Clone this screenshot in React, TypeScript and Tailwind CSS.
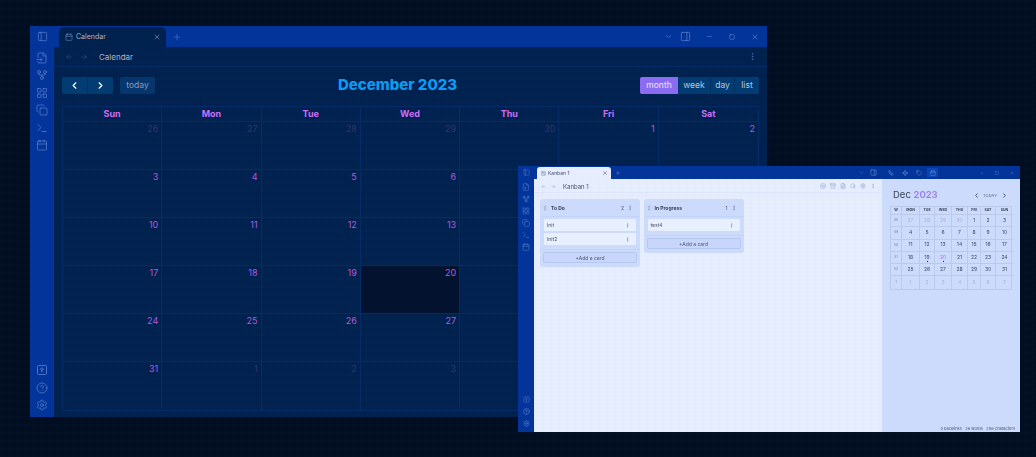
import { ArrowLeft, ArrowRight, Calendar, ChevronDown, ChevronLeft, ChevronRight, CircleHelp, Copy, EllipsisVertical, FileInput, GitFork, LayoutGrid, Minus, PanelLeft, PanelRight, Plus, Search, Settings, Square, SquareKanban, Terminal, X, FileText, Archive, CirclePlus, Tag, GripVertical, Workflow, Waypoints } from "lucide-react";

const gridBg = "bg-[linear-gradient(rgba(120,170,255,0.014)_1px,transparent_1px),linear-gradient(90deg,rgba(120,170,255,0.014)_1px,transparent_1px)] bg-[size:8px_8px]";
const lightGridBg = "bg-[linear-gradient(rgba(60,100,200,0.016)_1px,transparent_1px),linear-gradient(90deg,rgba(60,100,200,0.016)_1px,transparent_1px)] bg-[size:8px_8px]";

function VaultIcon({ size }: { size: number }) {
  return (
    <svg width={size} height={size} viewBox="0 0 24 24" fill="none" stroke="currentColor" strokeWidth={1.6}>
      <rect x="3" y="3" width="18" height="18" rx="2" />
      <circle cx="12" cy="10.5" r="2.5" />
      <path d="M12 13v4" />
    </svg>
  );
}

type Day = { n: number; muted?: boolean; today?: boolean };
const weeks: Day[][] = [
  [{ n: 26, muted: true }, { n: 27, muted: true }, { n: 28, muted: true }, { n: 29, muted: true }, { n: 30, muted: true }, { n: 1 }, { n: 2 }],
  [3, 4, 5, 6, 7, 8, 9].map((n) => ({ n })),
  [10, 11, 12, 13, 14, 15, 16].map((n) => ({ n })),
  [{ n: 17 }, { n: 18 }, { n: 19 }, { n: 20, today: true }, { n: 21 }, { n: 22 }, { n: 23 }],
  [24, 25, 26, 27, 28, 29, 30].map((n) => ({ n })),
  [{ n: 31 }, { n: 1, muted: true }, { n: 2, muted: true }, { n: 3, muted: true }, { n: 4, muted: true }, { n: 5, muted: true }, { n: 6, muted: true }],
];

function DarkWindow() {
  const icons = [FileInput, GitFork, LayoutGrid, Copy, Terminal, Calendar];
  return (
    <div className="absolute left-[30px] top-[26px] flex h-[391px] w-[737px] bg-[#03349a]">
      <div className="flex w-[24px] shrink-0 flex-col items-center text-[#5c82cf]">
        <div className="flex h-[21px] items-center"><PanelLeft size={11} strokeWidth={1.5} /></div>
        <div className="mt-[5px] flex flex-col items-center gap-[5.4px]">
          {icons.map((I, i) => <I key={i} size={12} strokeWidth={1.4} />)}
        </div>
        <div className="mt-auto mb-[6px] flex flex-col items-center gap-[5.5px]">
          <VaultIcon size={12} />
          <CircleHelp size={12} strokeWidth={1.4} />
          <Settings size={12} strokeWidth={1.4} />
        </div>
      </div>
      <div className="flex min-w-0 flex-1 flex-col">
        <div className="flex h-[21px] shrink-0 items-end text-[#7f9fe0]">
          <div className="ml-[5px] flex h-[20px] w-[107px] items-center rounded-t-[5px] bg-[#01214f] pl-[6px] pr-[5px] text-[#aab5c9]">
            <Calendar size={8} strokeWidth={1.5} className="text-[#7c97cc]" />
            <span className="ml-[3px] text-[7px]">Calendar</span>
            <X size={8} className="ml-auto" strokeWidth={1.5} />
          </div>
          <div className="ml-[6px] flex h-[20px] items-center"><Plus size={10} strokeWidth={1.3} className="text-[#4f7bd3]" /></div>
          <div className="mb-[4px] ml-auto flex h-[13px] items-center pr-[8px] text-[#6f90d8]">
            <ChevronDown size={9} strokeWidth={1.5} />
            <PanelRight size={11} strokeWidth={1.3} className="ml-[7px]" />
            <Minus size={7} className="ml-[15px]" strokeWidth={1.6} />
            <Square size={6} className="ml-[16px]" strokeWidth={2} />
            <X size={8} className="ml-[16px]" strokeWidth={1.5} />
          </div>
        </div>
        <div className={`flex min-h-0 flex-1 flex-col bg-[#01214f] ${gridBg}`}>
          <div className="flex h-[20px] shrink-0 items-center border-b border-[#032b66] pl-[11px] pr-[10px] text-[#3a5788]">
            <ArrowLeft size={8} strokeWidth={1.5} />
            <ArrowRight size={8} strokeWidth={1.5} className="ml-[7px]" />
            <span className="ml-[11px] text-[8px] text-[#a9b6cb]">Calendar</span>
            <EllipsisVertical size={9} strokeWidth={2} className="ml-auto text-[#4c6fae]" />
          </div>
          <div className="flex flex-1 flex-col px-[8px] pt-[10px]">
            <div className="relative flex h-[17px] items-center justify-between">
              <div className="flex items-center gap-[7px]">
                <div className="flex h-[17px] w-[51px] rounded-[2px] bg-[#033b73] text-white">
                  <div className="flex flex-1 items-center justify-center border-r border-[#033063]"><ChevronLeft size={11} strokeWidth={2.5} /></div>
                  <div className="flex flex-1 items-center justify-center"><ChevronRight size={11} strokeWidth={2.5} /></div>
                </div>
                <div className="flex h-[17px] w-[35px] items-center justify-center rounded-[2px] bg-[#05366e] text-[8.5px] text-[#8b9cb6]">today</div>
              </div>
              <div className="absolute left-[276px] top-[-2px] text-[15px] leading-[20px] font-extrabold text-[#0a9cf2]">December 2023</div>
              <div className="flex h-[17px] overflow-hidden rounded-[2px] bg-[#033b73] text-[8.5px] text-[#b9c8dc]">
                <div className="flex w-[38px] items-center justify-center bg-[#8b6cf0] text-[#e9e4ff]">month</div>
                <div className="flex w-[33px] items-center justify-center border-r border-[#033063]">week</div>
                <div className="flex w-[24px] items-center justify-center border-r border-[#033063]">day</div>
                <div className="flex w-[24px] items-center justify-center">list</div>
              </div>
            </div>
            <div className="mt-[12px] border border-[#032c68]">
              <div className="grid h-[15px] grid-cols-7 border-b border-[#032c68] text-[9px] font-bold text-[#cc6ef5]">
                {["Sun", "Mon", "Tue", "Wed", "Thu", "Fri", "Sat"].map((d, i) => (
                  <div key={d} className={`flex items-center justify-center ${i < 6 ? "border-r border-[#032c68]" : ""}`}>{d}</div>
                ))}
              </div>
              {weeks.map((w, i) => (
                <div key={i} className={`grid h-[48px] grid-cols-7 ${i < 5 ? "border-b border-[#032c68]" : ""}`}>
                  {w.map((d, j) => (
                    <div key={j} className={`pr-[3px] pt-[1px] text-right text-[9px] leading-[12px] ${j < 6 ? "border-r border-[#032c68]" : ""} ${d.muted ? "text-[#33336f]" : "text-[#b459dc]"} ${d.today ? "bg-[#03132f]" : ""}`}>{d.n}</div>
                  ))}
                </div>
              ))}
            </div>
          </div>
        </div>
      </div>
    </div>
  );
}

function KanbanColumn({ title, count, cards, width }: { title: string; count: number; cards: string[]; width: string }) {
  return (
    <div className={`${width} rounded-[3px] bg-[#ccdafb]`}>
      <div className="flex h-[18px] items-center border-b border-[#c2d2f8] pl-[2px] pr-[7px]">
        <GripVertical size={6} className="text-[#9aa9c8]" />
        <span className="ml-[3px] text-[5px] leading-[6px] font-bold text-[#33415c]">{title}</span>
        <span className="ml-auto text-[5px] leading-[6px] text-[#4b5a78]">{count}</span>
        <EllipsisVertical size={6} className="ml-[3px] text-[#5b78b8]" />
      </div>
      <div className="flex flex-col gap-[2px] px-[4px] pb-[4px] pt-[2px]">
        {cards.map((c) => (
          <div key={c} className="flex h-[12px] items-center justify-between rounded-[1px] bg-[#e8effe] pl-[3px] pr-[6px] text-[5px] leading-[6px] text-[#4a5670]">
            {c}<EllipsisVertical size={5} className="text-[#5b78b8]" />
          </div>
        ))}
      </div>
      <div className="border-t border-[#c2d2f8] px-[3px] pb-[4px] pt-[2px]">
        <div className="flex h-[11px] items-center justify-center rounded-[2px] border border-[#b6c7ef] bg-[#c7d6fa] text-[5px] leading-[6px] text-[#4a5670]">+Add a card</div>
      </div>
    </div>
  );
}

const miniCols = ["W", "MON", "TUE", "WED", "THU", "FRI", "SAT", "SUN"];
const miniRows: { w: number; days: { n: number; m?: boolean; dot?: boolean; accent?: boolean }[] }[] = [
  { w: 48, days: [{ n: 27, m: true }, { n: 28, m: true }, { n: 29, m: true }, { n: 30, m: true }, { n: 1 }, { n: 2 }, { n: 3 }] },
  { w: 49, days: [4, 5, 6, 7, 8, 9, 10].map((n) => ({ n })) },
  { w: 50, days: [11, 12, 13, 14, 15, 16, 17].map((n) => ({ n })) },
  { w: 51, days: [{ n: 18 }, { n: 19, dot: true }, { n: 20, dot: true, accent: true }, { n: 21 }, { n: 22 }, { n: 23 }, { n: 24 }] },
  { w: 52, days: [25, 26, 27, 28, 29, 30, 31].map((n) => ({ n })) },
  { w: 1, days: [1, 2, 3, 4, 5, 6, 7].map((n) => ({ n, m: true })) },
];

function MiniCalendar() {
  return (
    <div className="flex w-[138px] shrink-0 flex-col bg-[#ccdafc] pl-[8px] pr-[8px]">
      <div className="flex h-[27px] items-center pl-[3px] pt-[5px]">
        <span className="text-[9.5px] text-[#3a4256]">Dec <span className="font-semibold text-[#9a7cf0]">2023</span></span>
        <ChevronLeft size={7} strokeWidth={3} className="ml-auto text-[#3a4256]" />
        <span className="ml-[3px] text-[4px] leading-[5px] tracking-wide text-[#5b6a88]">TODAY</span>
        <ChevronRight size={7} strokeWidth={3} className="ml-[4px] mr-[4px] text-[#3a4256]" />
      </div>
      <div className="grid grid-cols-[11px_18px_15px_17px_16px_13px_15px_17px] border border-[#bccaea] text-center">
        {miniCols.map((c, i) => (
          <div key={c} className={`flex h-[8px] items-center justify-center border-b border-[#bccaea] text-[3.5px] font-bold text-[#3a4256] ${i < 7 ? "border-r" : ""}`}>{c}</div>
        ))}
        {miniRows.flatMap((r, ri) => [
          <div key={`w${ri}`} className={`flex h-[12.3px] items-center justify-center border-r border-[#bccaea] text-[3.5px] text-[#7d88a4] ${ri < 5 ? "border-b" : ""}`}>{r.w}</div>,
          ...r.days.map((d, di) => (
            <div key={`${ri}-${di}`} className={`relative flex h-[12.3px] items-center justify-center border-[#bccaea] text-[5px] ${di < 6 ? "border-r" : ""} ${ri < 5 ? "border-b" : ""} ${d.m ? "text-[#aab5d0]" : d.accent ? "text-[#9a7cf0]" : "text-[#3f4a64]"}`}>
              {d.n}
              {d.dot && <span className="absolute bottom-[1px] h-[1px] w-[1px] bg-[#222]" />}
            </div>
          )),
        ])}
      </div>
    </div>
  );
}

function LightWindow() {
  const icons = [FileInput, GitFork, LayoutGrid, Copy, Terminal, Calendar];
  return (
    <div className="absolute left-[518px] top-[166px] flex h-[266px] w-[502px] flex-col bg-[#03349a] blur-[0.35px]">
      <div className="flex h-[13px] shrink-0 items-end">
        <div className="flex w-[16px] shrink-0 justify-center self-center text-[#5c82cf]"><PanelLeft size={7} strokeWidth={1.5} /></div>
        <div className="ml-[3px] flex h-[12px] w-[74px] items-center rounded-t-[3px] bg-[#e6edfd] pl-[4px] pr-[3px] text-[5px] leading-[6px] text-[#47536c]">
          <SquareKanban size={5} className="text-[#5b78b8]" />
          <span className="ml-[2px]">Kanban 1</span>
          <X size={6} className="ml-auto" />
        </div>
        <Plus size={6} className="mb-[3px] ml-[4px] text-[#5c82cf]" />
        <div className="mb-[2px] ml-auto flex items-center pr-[6px] text-[#5f86d6]">
          <ChevronDown size={5} />
          <PanelRight size={7} className="ml-[6px]" />
          <Workflow size={6} className="ml-[11px]" />
          <Waypoints size={6} className="ml-[8px]" />
          <Tag size={6} className="ml-[8px]" />
          <div className="ml-[5px] flex h-[9px] w-[11px] items-center justify-center bg-[#0a45b4]"><Calendar size={6} /></div>
          <Minus size={4} className="ml-[42px]" />
          <Square size={4} className="ml-[11px]" />
          <X size={4} className="ml-[11px]" />
        </div>
      </div>
      <div className="flex min-h-0 flex-1">
        <div className="flex w-[16px] shrink-0 flex-col items-center pt-[4px] text-[#5c82cf]">
          <div className="flex flex-col items-center gap-[4px]">
            {icons.map((I, i) => <I key={i} size={8} strokeWidth={1.5} />)}
          </div>
          <div className="mt-auto mb-[5px] flex flex-col items-center gap-[5px]">
            <VaultIcon size={7} /><CircleHelp size={7} /><Settings size={7} />
          </div>
        </div>
        <div className={`flex min-w-0 flex-1 flex-col bg-[#e6edfd] ${lightGridBg}`}>
          <div className="flex h-[14px] shrink-0 items-center border-b border-[#dce5fb] pl-[7px] pr-[6px] pt-[1px] text-[#9fb0d0]">
            <ArrowLeft size={5} /><ArrowRight size={5} className="ml-[5px]" />
            <span className="ml-[7px] text-[6px] leading-[7px] text-[#4a5670]">Kanban 1</span>
            <div className="ml-auto flex items-center gap-[4px] text-[#8aa2d8]">
              <CirclePlus size={6} /><Archive size={6} /><FileText size={6} /><Search size={6} /><Settings size={6} /><EllipsisVertical size={6} />
            </div>
          </div>
          <div className="flex flex-1 items-start gap-[3.5px] pl-[6px] pt-[6px]">
            <KanbanColumn title="To Do" count={2} cards={["Init", "Init2"]} width="w-[100px]" />
            <KanbanColumn title="In Progress" count={1} cards={["test4"]} width="w-[100px]" />
          </div>
        </div>
        <div className="relative flex">
          <MiniCalendar />
          <div className="absolute bottom-[1px] right-[5px] text-[4px] leading-[5px] text-[#4b5670]">0 backlinks&nbsp;&nbsp; 26 words&nbsp;&nbsp; 206 characters</div>
        </div>
      </div>
    </div>
  );
}

export default function App() {
  return (
    <div className={`relative h-[457px] w-[1036px] overflow-hidden bg-[#010d20] font-['Inter',sans-serif] ${gridBg}`}>
      <DarkWindow />
      <LightWindow />
    </div>
  );
}
